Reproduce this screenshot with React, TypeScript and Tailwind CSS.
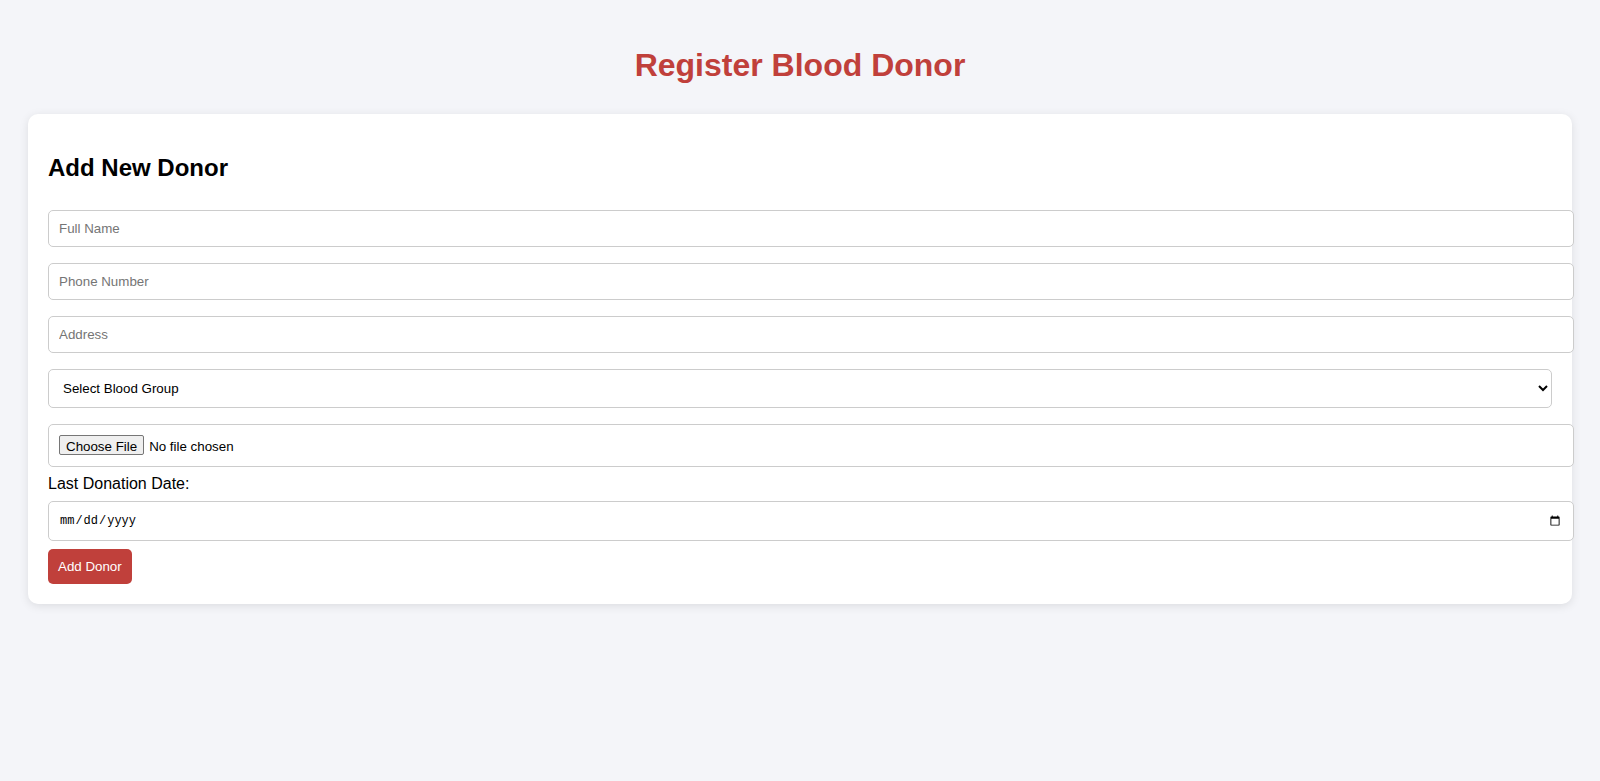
import { useState } from "react";

const bloodGroups = ["A+", "A-", "B+", "B-", "AB+", "AB-", "O+", "O-"];

export default function App() {
  const [group, setGroup] = useState("");

  const inputClass =
    "box-content w-full h-[15px] my-2 px-[10px] py-[10px] border border-[#cccccc] rounded-[5px] bg-white text-[13.333px] leading-[15px] text-black placeholder:text-[#757575] outline-none";

  return (
    <div className="min-h-screen bg-[#f4f5f9] px-[28px] pt-[47px] pb-10 font-['Liberation_Sans',Arial,sans-serif]">
      <h1 className="text-center text-[32px] leading-[37px] font-bold text-[#c0403b]">
        Register Blood Donor
      </h1>

      <div className="mt-[30px] rounded-[10px] bg-white p-5 shadow-[0_2px_10px_rgba(0,0,0,0.1)]">
        <h2 className="mt-5 mb-5 text-[24px] leading-[28px] font-bold text-black">
          Add New Donor
        </h2>

        <form className="flex flex-col items-start" onSubmit={(e) => e.preventDefault()}>
          <input type="text" placeholder="Full Name" className={inputClass} />
          <input type="text" placeholder="Phone Number" className={inputClass} />
          <input type="text" placeholder="Address" className={inputClass} />

          <select
            value={group}
            onChange={(e) => setGroup(e.target.value)}
            className="w-full h-[39px] my-2 px-[10px] border border-[#cccccc] rounded-[5px] bg-white text-[13.333px] text-black outline-none"
          >
            <option value="">Select Blood Group</option>
            {bloodGroups.map((g) => (
              <option key={g} value={g}>
                {g}
              </option>
            ))}
          </select>

          <input
            type="file"
            className="box-content w-full h-[21px] my-2 px-[10px] py-[10px] border border-[#cccccc] rounded-[5px] bg-white text-[13.333px] leading-[21px] text-black file:mr-[5px] file:h-[20px] file:px-[6px] file:border file:border-[#767676] file:rounded-[2px] file:bg-[#efefef] file:text-black file:text-[13.333px]"
          />

          <label className="block text-[16px] leading-[18px] text-black">Last Donation Date:</label>
          <input
            type="date"
            className="box-content w-full h-[18px] my-2 px-[10px] py-[10px] border border-[#cccccc] rounded-[5px] bg-white text-[12px] leading-[18px] text-black font-['Liberation_Mono',monospace] outline-none"
          />

          <button
            type="submit"
            className="h-[35px] px-[10px] rounded-[5px] bg-[#c0403b] text-white text-[13.333px] leading-[15px] cursor-pointer"
          >
            Add Donor
          </button>
        </form>
      </div>
    </div>
  );
}
